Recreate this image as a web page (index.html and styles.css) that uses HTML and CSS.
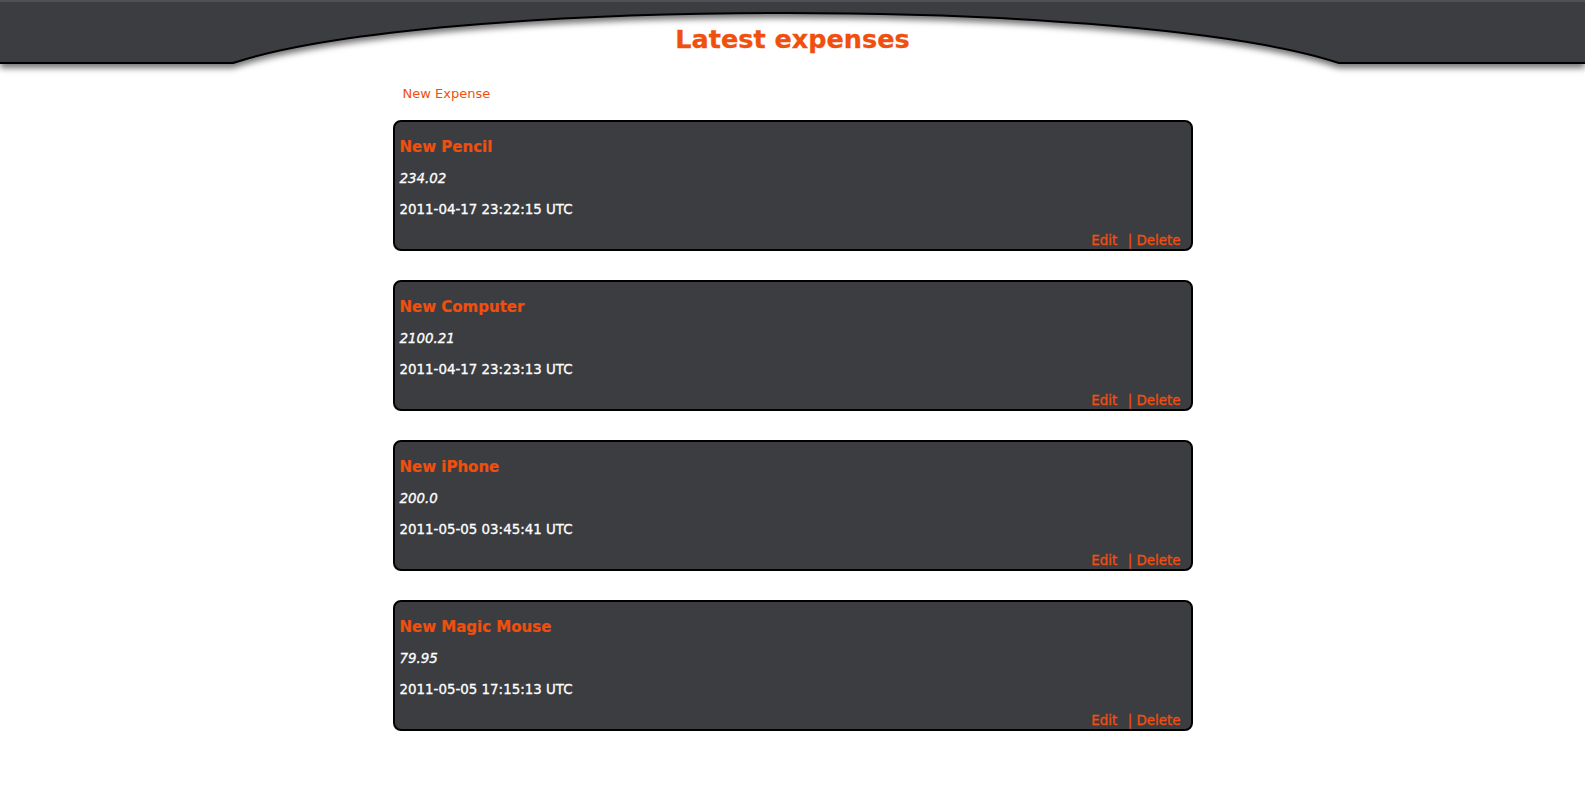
FILE: index.html
```html
<!DOCTYPE html>
<html>
<head>
<meta charset="utf-8">
<title>Latest expenses</title>
<link rel="stylesheet" href="styles.css">
</head>
<body>
<header class="header">
  <svg class="header-bg" viewBox="0 0 1585 80" width="1585" height="80" aria-hidden="true">
    <path class="band" d="M0,0 H1585 V63 H1339 C1242,31 1022,13 786,13 C550,13 330,31 233,63 H0 Z"/>
    <rect class="band-top" x="0" y="0" width="1585" height="2"/>
    <path class="band-edge" d="M0,63 H233 C330,31 550,13 786,13 C1022,13 1242,31 1339,63 H1585"/>
  </svg>
  <h1 class="title">Latest expenses</h1>
</header>
<main class="content">
  <a class="new-link" href="#">New Expense</a>
  <div class="expense">
    <h2 class="expense-name">New Pencil</h2>
    <p class="expense-amount">234.02</p>
    <p class="expense-date">2011-04-17 23:22:15 UTC</p>
    <div class="expense-actions"><a class="edit" href="#">Edit</a> &nbsp;| <a href="#">Delete</a></div>
  </div>
  <div class="expense">
    <h2 class="expense-name">New Computer</h2>
    <p class="expense-amount">2100.21</p>
    <p class="expense-date">2011-04-17 23:23:13 UTC</p>
    <div class="expense-actions"><a class="edit" href="#">Edit</a> &nbsp;| <a href="#">Delete</a></div>
  </div>
  <div class="expense">
    <h2 class="expense-name">New iPhone</h2>
    <p class="expense-amount">200.0</p>
    <p class="expense-date">2011-05-05 03:45:41 UTC</p>
    <div class="expense-actions"><a class="edit" href="#">Edit</a> &nbsp;| <a href="#">Delete</a></div>
  </div>
  <div class="expense">
    <h2 class="expense-name">New Magic Mouse</h2>
    <p class="expense-amount">79.95</p>
    <p class="expense-date">2011-05-05 17:15:13 UTC</p>
    <div class="expense-actions"><a class="edit" href="#">Edit</a> &nbsp;| <a href="#">Delete</a></div>
  </div>
</main>
</body>
</html>
```
FILE: styles.css
```css
html, body {
  margin: 0;
  padding: 0;
  background: #ffffff;
}
body {
  font-family: "DejaVu Sans", Verdana, sans-serif;
  font-size: 13.4px;
  color: #ffffff;
}
a {
  color: #f04f0e;
  text-decoration: none;
}
.header {
  position: relative;
  height: 72px;
}
.header-bg {
  position: absolute;
  left: 0;
  top: 0;
  width: 100%;
  height: 80px;
  filter: drop-shadow(0 4px 3px rgba(0, 0, 0, 0.55));
}
.band {
  fill: #3c3d41;
}
.band-top {
  fill: #505155;
}
.band-edge {
  fill: none;
  stroke: #000000;
  stroke-width: 2;
}
.title {
  position: relative;
  margin: 0;
  padding-top: 23px;
  text-align: center;
  font-family: "DejaVu Sans", Verdana, sans-serif;
  font-weight: bold;
  font-size: 25.5px;
  line-height: 32px;
  color: #f04f0e;
  -webkit-text-stroke: 0.3px #f04f0e;
}
.content {
  width: 800px;
  margin: 0 auto;
  padding-top: 14px;
}
.new-link {
  display: block;
  padding-left: 10px;
  font-size: 13px;
  line-height: 16px;
  margin-bottom: 18px;
}
.expense {
  background: #3c3d41;
  border: 2px solid #000000;
  border-radius: 8px;
  padding: 0 10px 0 5px;
  margin-bottom: 29px;
}
.expense-name {
  margin: 16px 0 0;
  font-size: 15px;
  line-height: 18px;
  font-weight: bold;
  color: #f04f0e;
  -webkit-text-stroke: 0.2px #f04f0e;
}
.expense-amount {
  margin: 15px 0 0;
  font-style: italic;
  line-height: 16px;
  -webkit-text-stroke: 0.3px #ffffff;
}
.expense-date {
  margin: 15px 0 0;
  line-height: 16px;
  -webkit-text-stroke: 0.3px #ffffff;
}
.expense-actions {
  margin-top: 15px;
  line-height: 16px;
  text-align: right;
  color: #f04f0e;
  -webkit-text-stroke: 0.3px #f04f0e;
}
.edit {
  margin-right: 2px;
}
```
